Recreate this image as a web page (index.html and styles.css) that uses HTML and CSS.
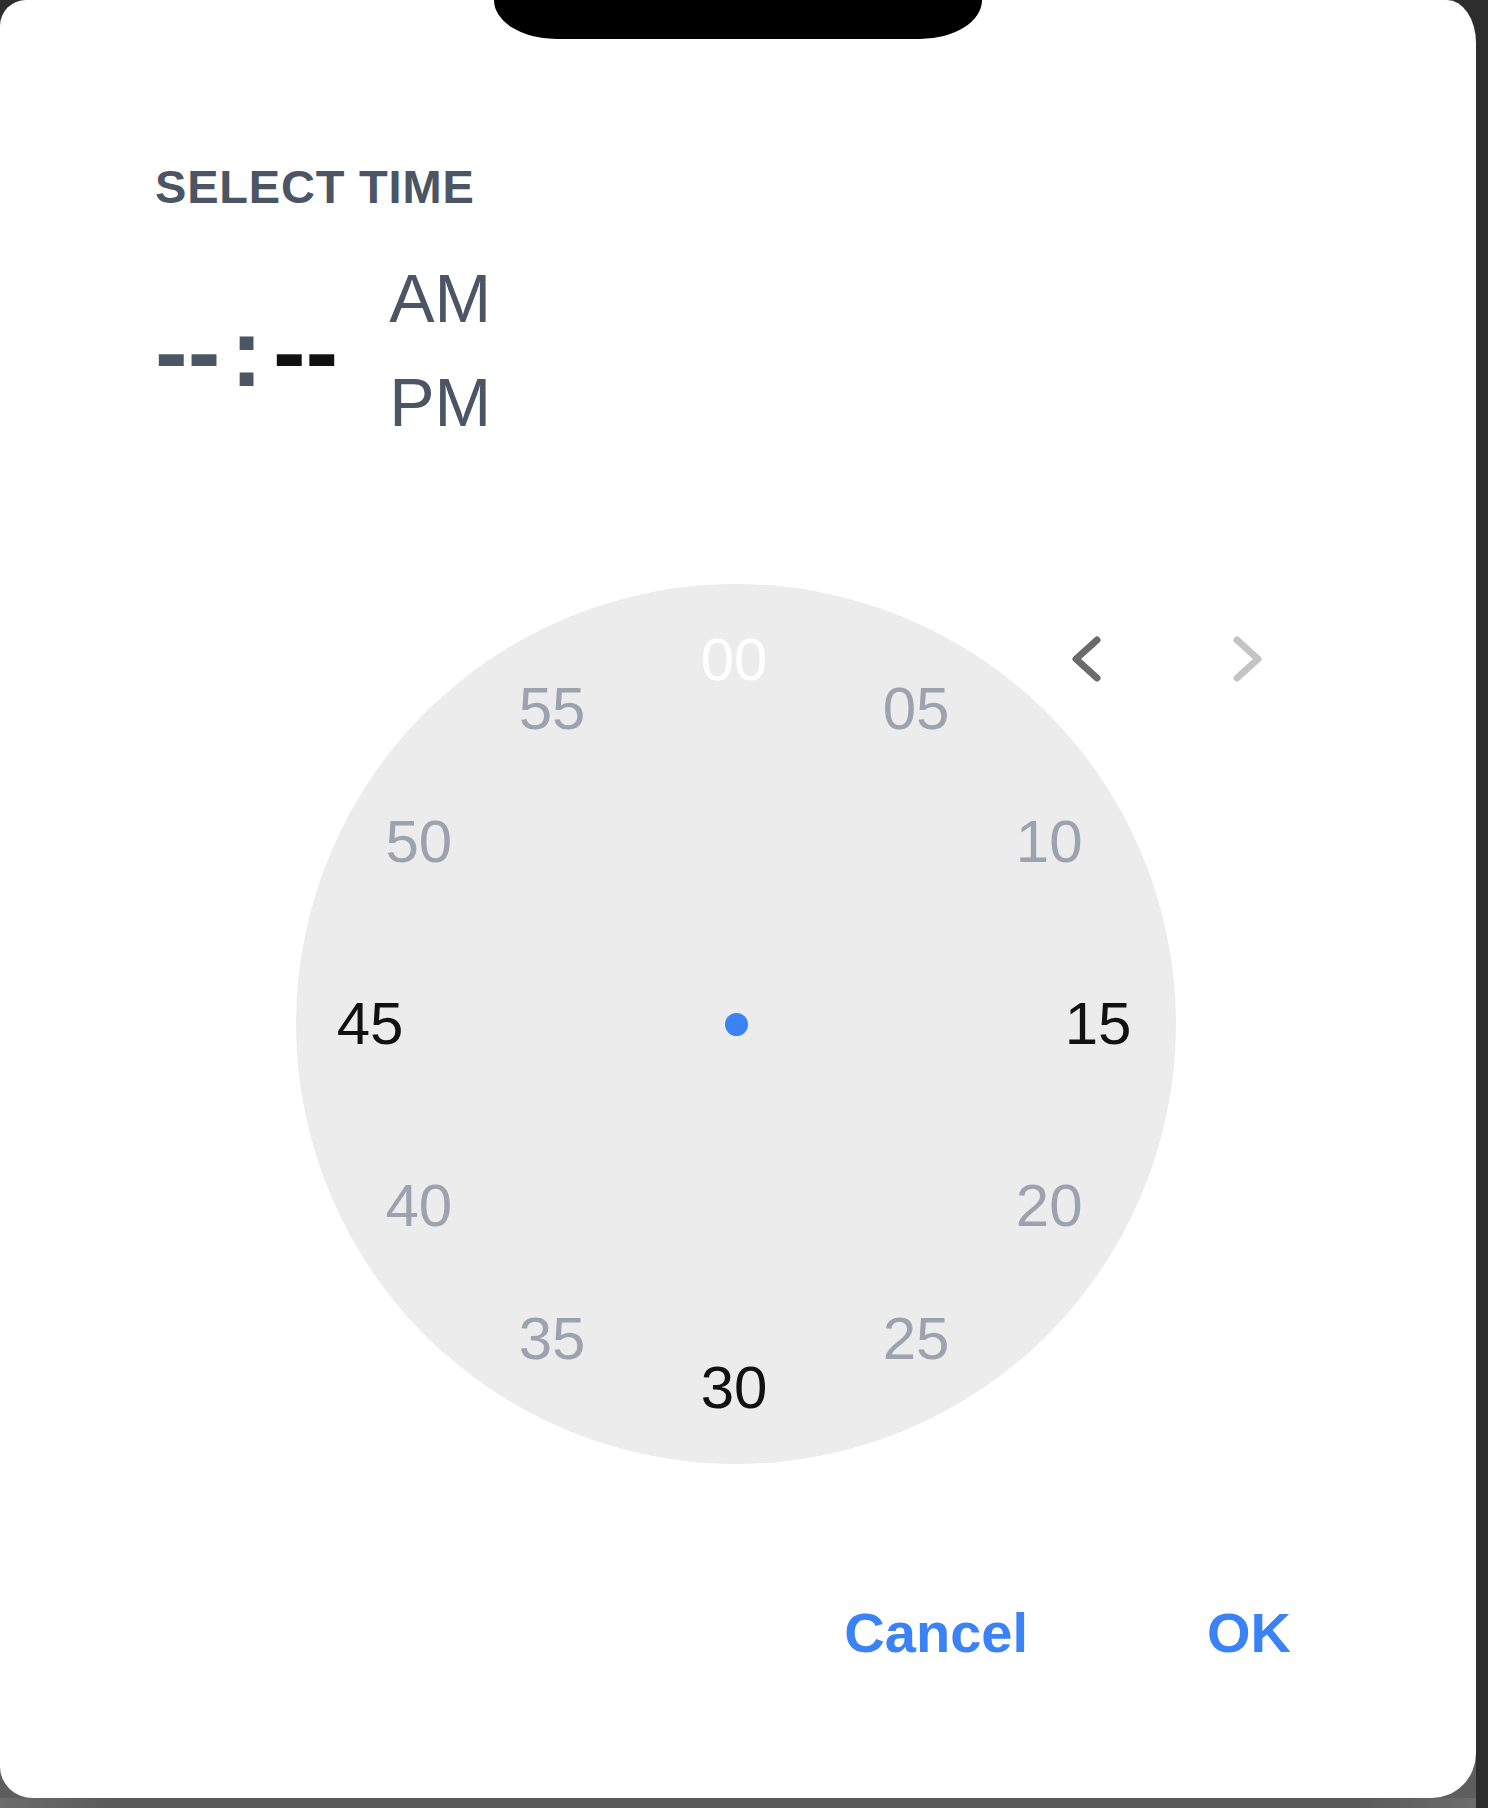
FILE: index.html
```html
<!DOCTYPE html>
<html lang="en">
<head>
<meta charset="utf-8">
<title>Select time</title>
<link rel="stylesheet" href="styles.css">
</head>
<body>
<div class="device">
  <div class="frame">
    <main class="screen">
      <div class="notch"></div>
      <header class="header">
        <h1 class="title">SELECT TIME</h1>
        <div class="readout">
          <div class="clock-text"><span class="hh">--</span><span class="colon">:</span><span class="mm">--</span></div>
          <div class="ampm"><span>AM</span><span>PM</span></div>
        </div>
      </header>
      <div class="clock-area">
        <div class="dial">
          <span class="num m00 sel">00</span>
          <span class="num m05">05</span>
          <span class="num m10">10</span>
          <span class="num m15 dark">15</span>
          <span class="num m20">20</span>
          <span class="num m25">25</span>
          <span class="num m30 dark">30</span>
          <span class="num m35">35</span>
          <span class="num m40">40</span>
          <span class="num m45 dark">45</span>
          <span class="num m50">50</span>
          <span class="num m55">55</span>
          <span class="pivot"></span>
        </div>
        <div class="nav">
          <button class="nav-btn prev" aria-label="Previous">
            <svg width="36" height="56" viewBox="0 0 36 56"><path d="M28 9 L7 28 L28 47" fill="none" stroke="currentColor" stroke-width="7" stroke-linecap="round" stroke-linejoin="round"/></svg>
          </button>
          <button class="nav-btn next" aria-label="Next">
            <svg width="36" height="56" viewBox="0 0 36 56"><path d="M7 9 L28 28 L7 47" fill="none" stroke="currentColor" stroke-width="7" stroke-linecap="round" stroke-linejoin="round"/></svg>
          </button>
        </div>
      </div>
      <div class="actions">
        <button class="action">Cancel</button>
        <button class="action">OK</button>
      </div>
    </main>
    <div class="chin"></div>
  </div>
</div>
</body>
</html>
```

FILE: styles.css
```css
html, body {
  margin: 0;
  padding: 0;
}

body {
  background: #2d2d2d;
  font-family: "Liberation Sans", Arial, sans-serif;
}

.device {
  display: flex;
  width: 1488px;
  height: 1808px;
}

.frame {
  width: 1476px;
  display: flex;
  flex-direction: column;
  background: linear-gradient(to bottom, #2d2d2d 0, #2d2d2d 50%, #5e5e5e 50%, #5e5e5e 100%);
}

.screen {
  height: 1798px;
  background: #ffffff;
  border-radius: 26px 29px 44px 33px / 26px 43px 45px 31px;
  overflow: hidden;
  display: flex;
  flex-direction: column;
}

.chin {
  height: 10px;
  background: linear-gradient(to right, #6c6c6c 0, #5a5a5a 8%, #5a5a5a 92%, #6c6c6c 100%);
}

.notch {
  width: 488px;
  height: 39px;
  margin: 0 auto;
  background: #000;
  border-radius: 0 0 62px 62px / 0 0 39px 39px;
  flex: none;
}

.header {
  padding-left: 155px;
}

.title {
  margin: 120px 0 0;
  font-size: 47px;
  line-height: 55px;
  font-weight: 700;
  color: #4b5563;
  letter-spacing: 0.8px;
}

.readout {
  margin-top: 32px;
  display: flex;
  align-items: center;
}

.clock-text {
  display: flex;
  gap: 10px;
  font-size: 98px;
  line-height: 98px;
  font-weight: 700;
  margin-top: 3px;
}

.hh, .colon {
  color: #4b5563;
}

.mm {
  color: #111111;
}

.ampm {
  display: flex;
  flex-direction: column;
  margin-left: 51px;
  font-size: 68px;
  line-height: 104px;
  color: #4b5563;
}

.clock-area {
  position: relative;
  width: 880px;
  margin: 130px 0 0 296px;
}

.dial {
  position: relative;
  width: 880px;
  height: 880px;
  border-radius: 50%;
  background: #ececec;
}

.num {
  position: absolute;
  left: 50%;
  top: 50%;
  width: 90px;
  height: 60px;
  margin-left: -47px;
  margin-top: -30px;
  font-size: 60px;
  line-height: 60px;
  text-align: center;
  color: #9ca3af;
  transform: rotate(var(--a)) translateY(-364px) rotate(calc(-1 * var(--a)));
}

.num.dark { color: #111111; }
.num.sel { color: #ffffff; }

.m00 { --a: 0deg; }
.m05 { --a: 30deg; }
.m10 { --a: 60deg; }
.m15 { --a: 90deg; }
.m20 { --a: 120deg; }
.m25 { --a: 150deg; }
.m30 { --a: 180deg; }
.m35 { --a: 210deg; }
.m40 { --a: 240deg; }
.m45 { --a: 270deg; }
.m50 { --a: 300deg; }
.m55 { --a: 330deg; }

.pivot {
  position: absolute;
  left: 50%;
  top: 50%;
  width: 23px;
  height: 23px;
  margin: -11.5px 0 0 -11.5px;
  border-radius: 50%;
  background: #3b82f6;
}

.nav {
  position: absolute;
  top: 47px;
  left: 773px;
  display: flex;
  gap: 125px;
}

.nav-btn {
  display: block;
  width: 36px;
  height: 56px;
  padding: 0;
  border: 0;
  background: none;
}

.nav-btn svg {
  display: block;
}

.prev { color: #6b6b6b; }
.next { color: #c4c4c4; }

.actions {
  margin-top: 136px;
  display: flex;
  justify-content: flex-end;
  gap: 179px;
  padding-right: 185px;
}

.action {
  padding: 0;
  border: 0;
  background: none;
  font-family: "Liberation Sans", Arial, sans-serif;
  font-size: 56px;
  line-height: 66px;
  font-weight: 700;
  color: #3b82f6;
}
```
